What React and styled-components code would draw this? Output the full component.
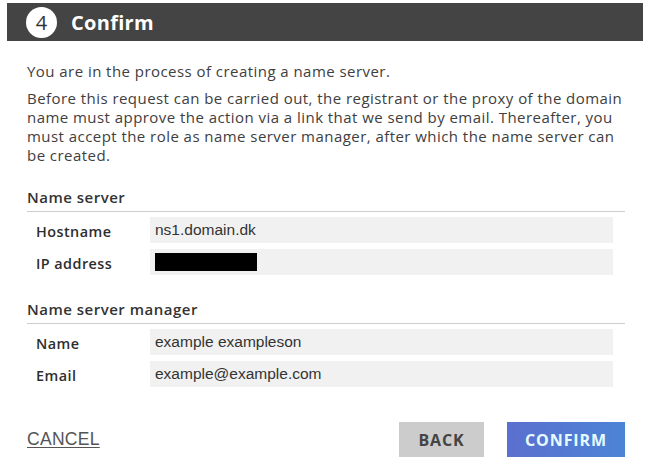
import React from 'react';
import styled, { createGlobalStyle } from 'styled-components';

const GlobalStyle = createGlobalStyle`
  body {
    margin: 0;
    background: #fff;
    font-family: "Open Sans", "Noto Sans", sans-serif;
    color: #3a3a3a;
  }
`;

const Dialog = styled.div`
  width: 650px;
  height: 467px;
  padding-top: 3px;
  box-sizing: border-box;
  overflow: hidden;
`;

const Header = styled.div`
  margin: 0 7px;
  height: 38px;
  background: #444444;
  display: flex;
  align-items: center;
  padding-left: 19px;
  gap: 14px;
`;

const StepBadge = styled.span`
  width: 31px;
  height: 31px;
  border-radius: 50%;
  background: #fff;
  color: #333;
  display: flex;
  align-items: center;
  justify-content: center;
  font-size: 20px;
`;

const Title = styled.h1`
  margin: 0;
  color: #fff;
  font-size: 20px;
  font-weight: 700;
  letter-spacing: 0.3px;
`;

const Body = styled.div`
  padding: 0 25px 0 27px;
`;

const Text = styled.p`
  margin: ${(p) => p.$top}px 0 0;
  font-size: 15px;
  line-height: 19px;
  letter-spacing: 0.45px;
  color: #404040;
  white-space: nowrap;
`;

const SectionTitle = styled.h2`
  margin: ${(p) => p.$top}px 0 0;
  padding-bottom: 4px;
  border-bottom: 1px solid #cfcfcf;
  font-size: 15px;
  line-height: 19px;
  font-weight: 600;
  letter-spacing: 0.5px;
  color: #333;
`;

const Fields = styled.div`
  display: grid;
  grid-template-columns: 114px 463px;
  row-gap: 6px;
  margin-top: 5px;
  padding-left: 9px;
`;

const Label = styled.span`
  font-size: 14.4px;
  font-weight: 600;
  letter-spacing: 0.45px;
  color: #2e2e2e;
  align-self: center;
  padding-top: 3px;
`;

const Value = styled.div`
  height: 26px;
  background: #f1f1f1;
  display: flex;
  align-items: center;
  padding-left: 5px;
  font-family: "Liberation Sans", Arial, sans-serif;
  font-size: 15.5px;
  color: #333;
`;

const Redacted = styled.span`
  display: block;
  width: 102px;
  height: 18px;
  background: #000;
`;

const Footer = styled.div`
  display: flex;
  align-items: center;
  margin-top: 35px;
  gap: 23px;
`;

const CancelLink = styled.a`
  font-family: "Liberation Sans", Arial, sans-serif;
  font-size: 17.5px;
  letter-spacing: 0.3px;
  color: #555;
  text-decoration: underline;
  text-decoration-thickness: 1px;
  text-underline-offset: 2px;
  margin-right: auto;
  cursor: pointer;
`;

const Button = styled.button`
  height: 35px;
  border: none;
  padding: 0;
  width: ${(p) => (p.$primary ? 118 : 85)}px;
  background: ${(p) => (p.$primary ? 'linear-gradient(90deg, #5b6fcf, #4c84d6)' : '#cccccc')};
  color: ${(p) => (p.$primary ? '#e6fbff' : '#444')};
  font-family: "Open Sans", sans-serif;
  font-weight: 700;
  font-size: 16px;
  letter-spacing: 0.9px;
  cursor: pointer;
`;

const intro = [
  'Before this request can be carried out, the registrant or the proxy of the domain',
  'name must approve the action via a link that we send by email. Thereafter, you',
  'must accept the role as name server manager, after which the name server can',
  'be created.',
];

const nameServer = [
  { label: 'Hostname', value: 'ns1.domain.dk' },
  { label: 'IP address', hidden: true },
];

const manager = [
  { label: 'Name', value: 'example exampleson' },
  { label: 'Email', value: 'example@example.com' },
];

function FieldList({ rows }) {
  return (
    <Fields>
      {rows.map((row) => (
        <React.Fragment key={row.label}>
          <Label>{row.label}</Label>
          <Value>{row.hidden ? <Redacted /> : row.value}</Value>
        </React.Fragment>
      ))}
    </Fields>
  );
}

export default function App() {
  return (
    <>
      <GlobalStyle />
      <Dialog>
        <Header>
          <StepBadge>4</StepBadge>
          <Title>Confirm</Title>
        </Header>
        <Body>
          <Text $top={21}>You are in the process of creating a name server.</Text>
          <Text $top={8}>
            {intro.map((line, i) => (
              <React.Fragment key={i}>
                {line}
                {i < intro.length - 1 && <br />}
              </React.Fragment>
            ))}
          </Text>
          <SectionTitle $top={23}>Name server</SectionTitle>
          <FieldList rows={nameServer} />
          <SectionTitle $top={25}>Name server manager</SectionTitle>
          <FieldList rows={manager} />
          <Footer>
            <CancelLink>CANCEL</CancelLink>
            <Button>BACK</Button>
            <Button $primary>CONFIRM</Button>
          </Footer>
        </Body>
      </Dialog>
    </>
  );
}
